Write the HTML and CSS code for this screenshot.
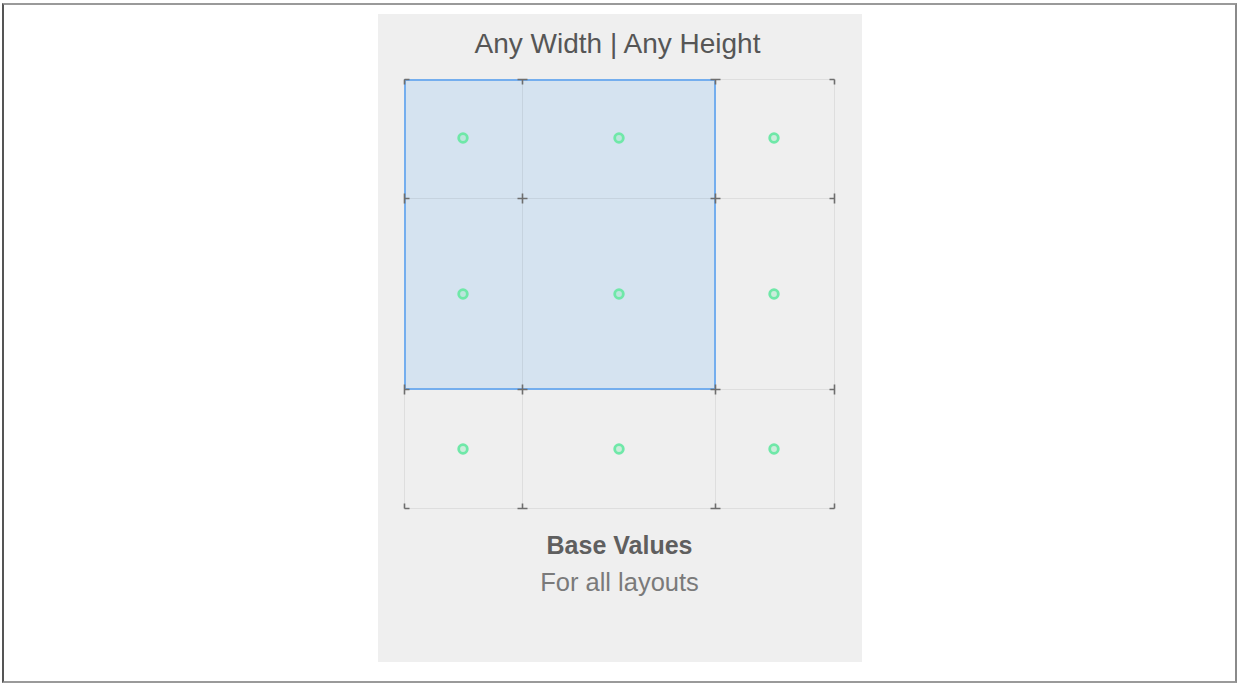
FILE: index.html
```html
<!DOCTYPE html>
<html>
<head>
<meta charset="utf-8">
<link rel="stylesheet" href="styles.css">
</head>
<body>
<div class="frame">
  <div class="panel">
    <div class="title">Any Width | Any Height</div>
    <svg class="grid" width="436" height="436" viewBox="0 0 436 436">
      <rect class="sel" x="3" y="3" width="310" height="309"/>
      <g class="lines">
        <path d="M120.5 2.5V431.5M313.5 2.5V431.5M432.5 2.5V431.5M2.5 2.5V431.5"/>
        <path d="M2.5 2.5H432.5M2.5 121.5H432.5M2.5 312.5H432.5M2.5 431.5H432.5"/>
      </g>
      <rect class="sel-edge" x="3" y="3" width="310" height="309"/>
      <path class="ticks" d="M2.5 2.5h5M2.5 2.5v5M115.5 2.5h10M120.5 2.5v5M308.5 2.5h10M313.5 2.5v5M427.5 2.5h5M432.5 2.5v5
        M2.5 116.5v10M2.5 121.5h5M115.5 121.5h10M120.5 116.5v10M308.5 121.5h10M313.5 116.5v10M432.5 116.5v10M427.5 121.5h5
        M2.5 307.5v10M2.5 312.5h5M115.5 312.5h10M120.5 307.5v10M308.5 312.5h10M313.5 307.5v10M432.5 307.5v10M427.5 312.5h5
        M2.5 426.5v5M2.5 431.5h5M115.5 431.5h10M120.5 426.5v5M308.5 431.5h10M313.5 426.5v5M432.5 426.5v5M427.5 431.5h5"/>
      <g class="dots">
        <circle cx="61" cy="61" r="4.3"/>
        <circle cx="217" cy="61" r="4.3"/>
        <circle cx="372" cy="61" r="4.3"/>
        <circle cx="61" cy="217" r="4.3"/>
        <circle cx="217" cy="217" r="4.3"/>
        <circle cx="372" cy="217" r="4.3"/>
        <circle cx="61" cy="372" r="4.3"/>
        <circle cx="217" cy="372" r="4.3"/>
        <circle cx="372" cy="372" r="4.3"/>
      </g>
    </svg>
    <div class="base">Base Values</div>
    <div class="sub">For all layouts</div>
  </div>
</div>
</body>
</html>
```

FILE: styles.css
```css
html, body {
  margin: 0;
  background: #ffffff;
}
body {
  padding: 3px 0 0 2px;
  font-family: "Liberation Sans", Arial, sans-serif;
}
.frame {
  box-sizing: border-box;
  width: 1235px;
  height: 680px;
  border-style: solid;
  border-width: 2px;
  border-color: #9a9a9a #8a8a8a #9a9a9a #555555;
  display: flex;
  justify-content: center;
  align-items: flex-start;
  padding-top: 9px;
}
.panel {
  width: 484px;
  height: 648px;
  background: #efefef;
  display: flex;
  flex-direction: column;
  align-items: center;
  box-sizing: border-box;
  padding-top: 14px;
}
.title {
  font-size: 28px;
  line-height: 31px;
  color: #565656;
  margin-right: 4px;
}
.grid {
  display: block;
  margin-top: 18px;
}
.sel {
  fill: #d5e3f0;
}
.sel-edge {
  fill: none;
  stroke: #74aeee;
  stroke-width: 2;
}
.lines path {
  fill: none;
  stroke: rgba(0, 0, 0, 0.07);
  stroke-width: 1;
}
.ticks {
  fill: none;
  stroke: #6e6e6e;
  stroke-width: 1.6;
}
.dots circle {
  fill: rgba(150, 236, 190, 0.4);
  stroke: #6fe8a8;
  stroke-width: 2.8;
}
.base {
  margin-top: 18px;
  font-size: 25px;
  font-weight: bold;
  line-height: 28px;
  color: #5f5f5f;
}
.sub {
  margin-top: 9px;
  font-size: 25.5px;
  line-height: 28px;
  color: #7a7a7a;
}
```
